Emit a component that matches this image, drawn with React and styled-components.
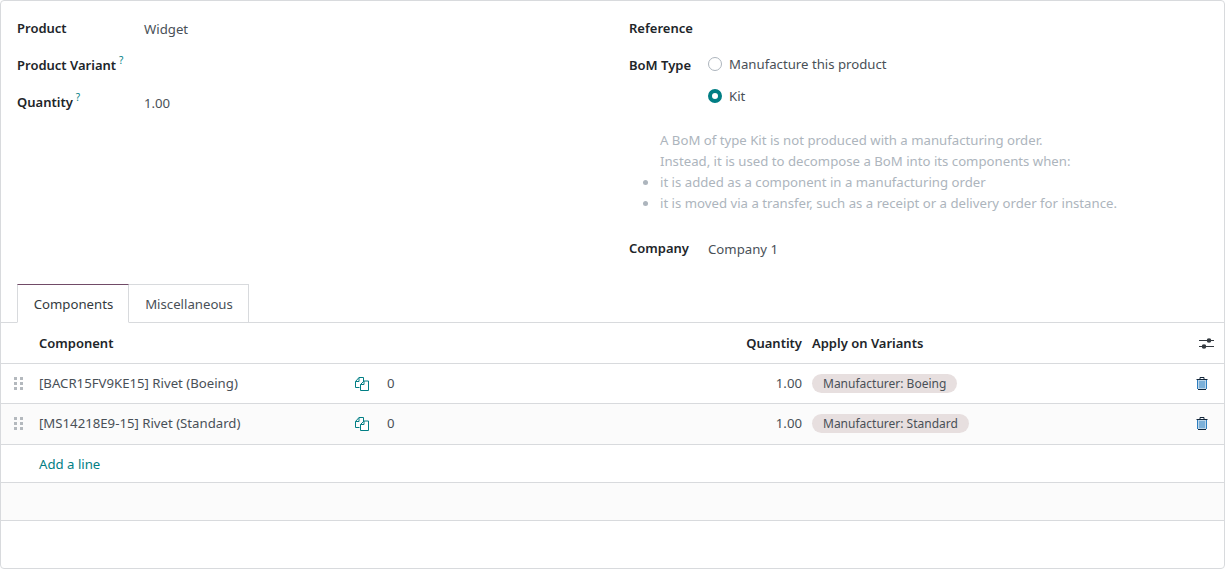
import React from 'react';
import styled, { createGlobalStyle } from 'styled-components';

const Global = createGlobalStyle`
  html, body {
    margin: 0;
    padding: 0;
    background: #fff;
  }
  body {
    font-family: "Noto Sans", "Open Sans", "Liberation Sans", sans-serif;
    font-size: 13.2px;
    line-height: 21px;
    color: #495057;
  }
`;

const Sheet = styled.div`
  box-sizing: border-box;
  width: 1225px;
  height: 569px;
  border: 1px solid #d8dadd;
  border-radius: 4px;
  background: #fff;
  overflow: hidden;
`;

const Head = styled.div`
  display: grid;
  grid-template-columns: 612px 1fr;
  height: 283px;
  padding-top: 17px;
  box-sizing: border-box;
`;

const Column = styled.div`
  padding-left: 16px;
`;

const Field = styled.div`
  display: flex;
  align-items: flex-start;
  min-height: 21px;
  margin-bottom: ${(p) => p.$after ?? 16}px;
`;

const Label = styled.div`
  width: ${(p) => p.$width}px;
  flex: none;
  font-size: 13px;
  font-weight: 600;
  color: #212529;
  white-space: nowrap;
`;

const Hint = styled.sup`
  font-size: 10px;
  font-weight: 400;
  color: #017e84;
  line-height: 0;
  margin-left: 3px;
  position: relative;
  top: -1px;
`;

const Value = styled.div`
  height: 20px;
  padding-top: 1px;
  white-space: nowrap;
`;

const Choices = styled.div`
  display: flex;
  flex-direction: column;
  gap: 11px;
  margin-top: -1px;
`;

const Choice = styled.div`
  display: flex;
  align-items: center;
  gap: 7px;
`;

const Radio = styled.span`
  box-sizing: border-box;
  width: 14px;
  height: 14px;
  margin-top: -1px;
  border-radius: 50%;
  border: ${(p) => (p.$on ? '4px solid #017e84' : '1px solid #adb5bd')};
  background: #fff;
  flex: none;
`;

const Help = styled.div`
  margin: 23px 0 24px 31px;
  color: #adb5bd;
`;

const HelpLine = styled.div`
  white-space: nowrap;
`;

const HelpList = styled.ul`
  margin: 0;
  padding: 0;
  list-style: none;
`;

const HelpItem = styled.li`
  position: relative;
  white-space: nowrap;
  &::before {
    content: '';
    position: absolute;
    left: -17px;
    top: 8px;
    width: 5px;
    height: 5px;
    border-radius: 50%;
    background: #adb5bd;
  }
`;

const Tabs = styled.div`
  display: flex;
  height: 39px;
  padding-left: 16px;
  box-sizing: border-box;
  border-bottom: 1px solid #d8dadd;
`;

const Tab = styled.div`
  box-sizing: border-box;
  width: ${(p) => p.$width}px;
  height: 39px;
  padding: 9px 0 0 1px;
  text-align: center;
  border: 1px solid #d8dadd;
  border-left-width: ${(p) => (p.$active ? 1 : 0)}px;
  border-top-color: ${(p) => (p.$active ? '#714b67' : '#d8dadd')};
  border-bottom-color: ${(p) => (p.$active ? '#fff' : '#d8dadd')};
  color: ${(p) => (p.$active ? '#343a40' : '#495057')};
  background: #fff;
`;

const Row = styled.div`
  display: grid;
  grid-template-columns: 38px 311px 37px 40px 375px 10px 378px 34px;
  align-items: center;
  height: ${(p) => p.$height || 40}px;
  padding-bottom: ${(p) => p.$pad || 0}px;
  box-sizing: border-box;
  border-bottom: 1px solid #d8dadd;
  background: ${(p) => (p.$shade ? '#fbfbfb' : '#fff')};
`;

const HeadCell = styled.div`
  font-size: 13px;
  font-weight: 600;
  color: #212529;
  white-space: nowrap;
  text-align: ${(p) => (p.$right ? 'right' : 'left')};
  grid-column: ${(p) => p.$col};
`;

const Cell = styled.div`
  white-space: nowrap;
  text-align: ${(p) => (p.$right ? 'right' : 'left')};
  grid-column: ${(p) => p.$col};
`;

const TagCell = styled.div`
  display: flex;
  grid-column: ${(p) => p.$col};
`;

const Handle = styled.div`
  display: grid;
  grid-template-columns: 3px 3px;
  gap: 2px 3px;
  padding-left: 13px;
  span {
    width: 3px;
    height: 3px;
    background: #b4b9be;
  }
`;

const IconCell = styled.div`
  display: flex;
  align-items: center;
  padding-left: ${(p) => p.$inset || 0}px;
  grid-column: ${(p) => p.$col};
`;

const Tag = styled.span`
  display: block;
  height: 19px;
  line-height: 19px;
  padding: 0 11px;
  border-radius: 10px;
  background: #e7dfdf;
  color: #495057;
  font-size: 12px;
  white-space: nowrap;
  overflow: hidden;
`;

const AddLine = styled.a`
  color: #017e84;
  grid-column: 2;
  margin-top: 2px;
`;

const Tail = styled.div`
  height: 38px;
  box-sizing: border-box;
  background: #fbfbfb;
  border-bottom: 1px solid #d8dadd;
`;

const SlidersIcon = () => (
  <svg width="15" height="12" viewBox="0 0 15 12">
    <path d="M0 3.5h15M0 9.5h15" stroke="#343a40" strokeWidth="1" />
    <circle cx="10" cy="3.5" r="2.3" fill="#343a40" />
    <circle cx="5" cy="9.5" r="2.3" fill="#343a40" />
  </svg>
);

const TrashIcon = () => (
  <svg width="12" height="13" viewBox="0 0 12 13" fill="none">
    <path d="M2 3h8v9H2z" fill="#bcd6ea" />
    <path d="M.5 2.5h11M4 2.5V.5h4v2M2 12.5h8" stroke="#12263a" />
    <path d="M1.5 3v9M10.5 3v9" stroke="#2f7fc0" />
    <path d="M4 4v7M6 4v7M8 4v7" stroke="#3f8cc8" />
  </svg>
);

const CopiesIcon = () => (
  <svg width="14" height="14" viewBox="0 0 14 14" fill="none" stroke="#017e84">
    <path d="M4.5 10.5h-4V4.5L4 .5h4.5v3.5" />
    <path d="M.5 4.5H4V.5" />
    <path d="M5.5 13.5V7.5L9 4h4.5v9.5z" fill="#fff" />
    <path d="M5.5 7.5H9V4" />
  </svg>
);

const lines = [
  { name: '[BACR15FV9KE15] Rivet (Boeing)', tag: 'Manufacturer: Boeing', height: 40 },
  { name: '[MS14218E9-15] Rivet (Standard)', tag: 'Manufacturer: Standard', height: 41, pad: 1, shade: true },
];

export default function App() {
  return (
    <>
      <Global />
      <Sheet>
        <Head>
          <Column>
            <Field>
              <Label $width={127}>Product</Label>
              <Value>Widget</Value>
            </Field>
            <Field>
              <Label $width={127}>Product Variant<Hint>?</Hint></Label>
            </Field>
            <Field>
              <Label $width={127}>Quantity<Hint>?</Hint></Label>
              <Value>1.00</Value>
            </Field>
          </Column>
          <Column>
            <Field>
              <Label $width={79}>Reference</Label>
            </Field>
            <Field $after={0}>
              <Label $width={79}>BoM Type</Label>
              <Choices>
                <Choice><Radio />Manufacture this product</Choice>
                <Choice><Radio $on />Kit</Choice>
              </Choices>
            </Field>
            <Help>
              <HelpLine>A BoM of type Kit is not produced with a manufacturing order.</HelpLine>
              <HelpLine>Instead, it is used to decompose a BoM into its components when:</HelpLine>
              <HelpList>
                <HelpItem>it is added as a component in a manufacturing order</HelpItem>
                <HelpItem>it is moved via a transfer, such as a receipt or a delivery order for instance.</HelpItem>
              </HelpList>
            </Help>
            <Field>
              <Label $width={79}>Company</Label>
              <Value>Company 1</Value>
            </Field>
          </Column>
        </Head>
        <Tabs>
          <Tab $active $width={112}>Components</Tab>
          <Tab $width={120}>Miscellaneous</Tab>
        </Tabs>
        <Row $height={41}>
          <HeadCell $col={2}>Component</HeadCell>
          <HeadCell $col={5} $right>Quantity</HeadCell>
          <HeadCell $col={7}>Apply on Variants</HeadCell>
          <IconCell $col={8} $inset={9}><SlidersIcon /></IconCell>
        </Row>
        {lines.map((line) => (
          <Row key={line.name} $shade={line.shade} $height={line.height} $pad={line.pad}>
            <Handle><span /><span /><span /><span /><span /><span /></Handle>
            <Cell>{line.name}</Cell>
            <IconCell $inset={5}><CopiesIcon /></IconCell>
            <Cell>0</Cell>
            <Cell $right>1.00</Cell>
            <TagCell $col={7}><Tag>{line.tag}</Tag></TagCell>
            <IconCell $col={8} $inset={6}><TrashIcon /></IconCell>
          </Row>
        ))}
        <Row $height={38}>
          <AddLine>Add a line</AddLine>
        </Row>
        <Tail />
      </Sheet>
    </>
  );
}
